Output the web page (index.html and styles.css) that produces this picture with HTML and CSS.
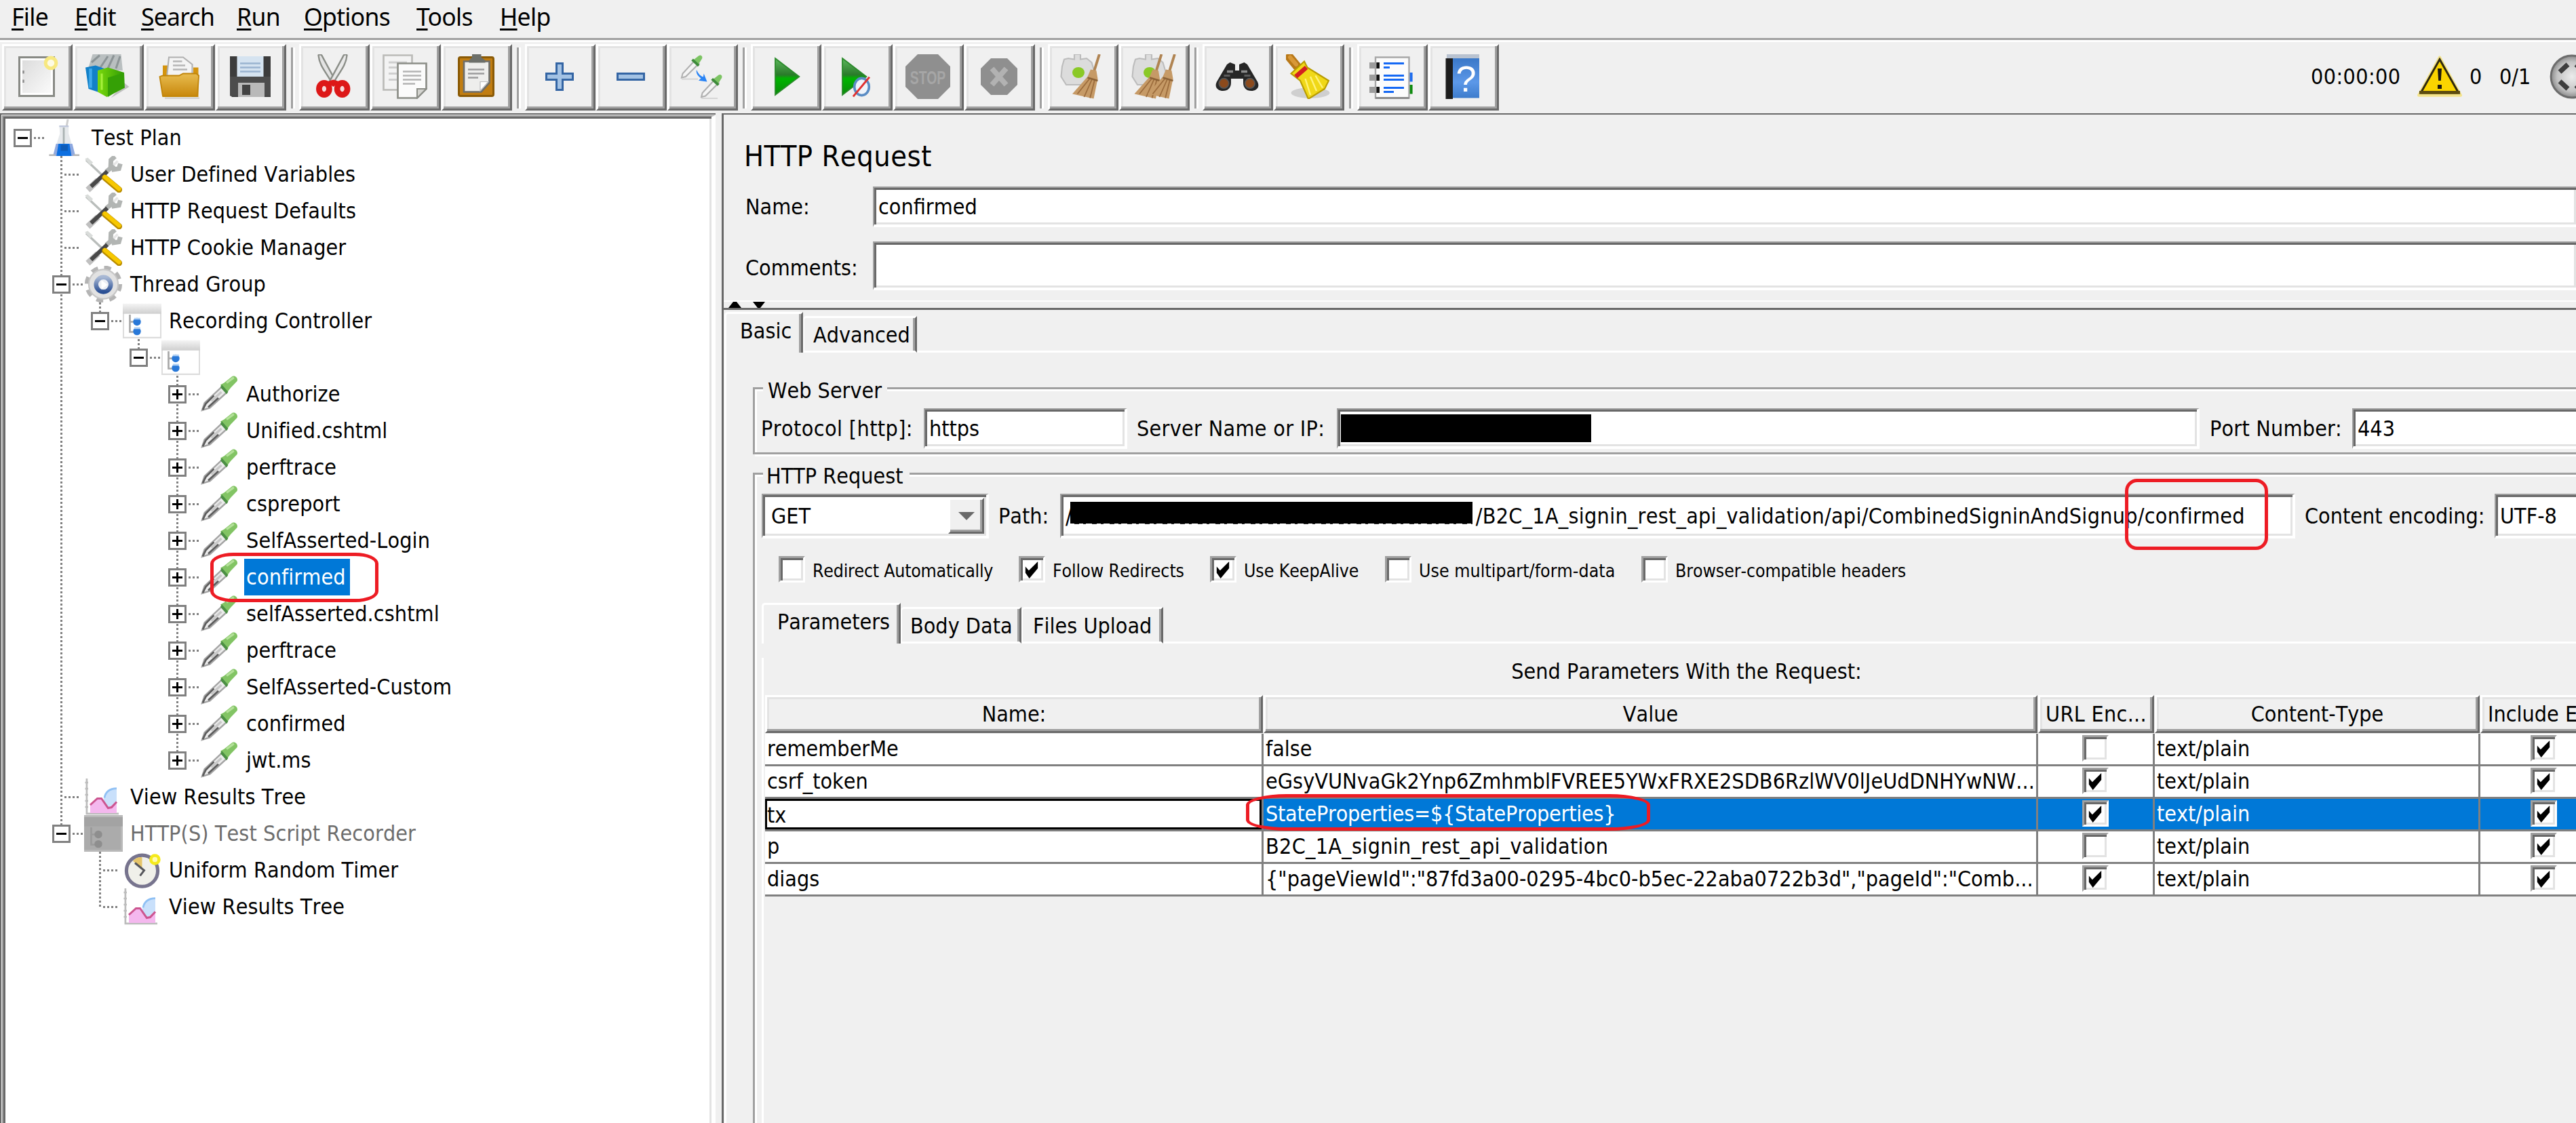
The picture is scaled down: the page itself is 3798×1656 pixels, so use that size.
FILE: index.html
```html
<!DOCTYPE html>
<html lang="en">
<head>
<meta charset="utf-8">
<title>Apache JMeter</title>
<link rel="stylesheet" href="styles.css">
</head>
<body>
<svg class="defs" width="0" height="0">
  <defs>
    <linearGradient id="gGold" x1="0" y1="0" x2="0" y2="1"><stop offset="0" stop-color="#e8bc50"/><stop offset="1" stop-color="#c8880c"/></linearGradient>
    <linearGradient id="gPaper" x1="0" y1="0" x2="1" y2="1"><stop offset="0" stop-color="#dcdcdc"/><stop offset="1" stop-color="#fafafa"/></linearGradient>
    <linearGradient id="gPlay" x1="0" y1="0" x2="0" y2="1"><stop offset="0" stop-color="#5cb85c"/><stop offset=".45" stop-color="#2a7a2a"/><stop offset=".55" stop-color="#00b400"/><stop offset="1" stop-color="#0a8a0a"/></linearGradient>
    <linearGradient id="gGreen" x1="0" y1="0" x2="1" y2="0"><stop offset="0" stop-color="#7ad80c"/><stop offset="1" stop-color="#2f9c04"/></linearGradient>
    <linearGradient id="gHead" x1="0" y1="0" x2="0" y2="1"><stop offset="0" stop-color="#f4f4f4"/><stop offset="1" stop-color="#cfcfcf"/></linearGradient>
    <linearGradient id="gBook" x1="0" y1="0" x2="0" y2="1"><stop offset="0" stop-color="#3a78c8"/><stop offset=".6" stop-color="#5c98e8"/><stop offset="1" stop-color="#3d7ccc"/></linearGradient>
    <linearGradient id="gRing" x1="0" y1="0" x2="0" y2="1"><stop offset="0" stop-color="#a8b8d4"/><stop offset="1" stop-color="#2a4f94"/></linearGradient>
    <radialGradient id="gBall"><stop offset="0" stop-color="#ececec"/><stop offset=".7" stop-color="#c4c4c4"/><stop offset="1" stop-color="#8c8c8c"/></radialGradient>
  </defs>
  <symbol id="dropper" viewBox="0 0 19 18">
    <path d="M1 17l1.200-3.600L10.500 5.600l2.600 2.600-8.300 7.600z" fill="#ececec" stroke="#a4a4a4" stroke-width=".8"/>
    <path d="M1.300 16.800l1.500-3 4-4M4 15.500l5-4.600" fill="none" stroke="#5c5c5c" stroke-width=".9"/>
    <path d="M5.500 12.500l5-4.500" stroke="#c8c8c8" stroke-width="1.200"/>
    <path d="M10 4.500l1.800-1 4-3.200c1.500-.6 3 .9 2.400 2.400L15 6l-2 2.600z" fill="#82c464"/>
    <path d="M10.600 4.300l3.200 3.600-.8 1.200-3-3.400z" fill="#4c9044"/>
    <path d="M13 3.500l3.600-2.600" stroke="#b4e09a" stroke-width="1.100"/>
  </symbol>
  <symbol id="tools" viewBox="0 0 19 18">
    <path d="M1 2l8.500 8" stroke="#b9bdbb" stroke-width="1.100"/>
    <path d="M.4 1.400l1.400-.6 2.600 2.400-1.400 1.300z" fill="#d9dcda"/>
    <path d="M10.800 7.800l4-3.300M13 6.500l.2-4.500 2-1.800M13.500 6.800l3.600-.6.7-2.400" stroke="#b2b5b3" stroke-width="2.300" fill="none"/>
    <path d="M14.500 4.500l2-2" stroke="#e6e6e6" stroke-width="1.200"/>
    <path d="M1.800 16.700l5-4.700" stroke="#c0c0c0" stroke-width="3"/>
    <path d="M3.400 15l8-7.400" stroke="#484848" stroke-width="2"/>
    <path d="M10.200 10.700l7 5.900" stroke="#b98c00" stroke-width="3" stroke-linecap="round"/>
    <path d="M10.200 10.300l7 5.900" stroke="#f7c800" stroke-width="2" stroke-linecap="round"/>
  </symbol>
  <symbol id="flask" viewBox="0 0 19 18">
    <path d="M10.300 4l.7-4" stroke="#cfcfcf" stroke-width="1"/>
    <path d="M6.800 3h4.600v4l3.200 11H3.600L7.100 7z" fill="#e6e9ec"/>
    <path d="M6.800 3.400h4.600" stroke="#c0c8dc" stroke-width=".8"/>
    <path d="M9 4v8" stroke="#a9b2b2" stroke-width=".9"/>
    <path d="M5.200 12h8l1.500 6H3.700z" fill="#8fa9e0"/>
    <path d="M6.400 12h5.400l1 6H5.400z" fill="#0d6fe0"/>
    <path d="M7.500 12.500h3.500v3h-3.500z" fill="#0f5cb8"/>
    <path d="M1.800 17.600h3M13.700 17.600h3" stroke="#b5b5b5" stroke-width=".8"/>
  </symbol>
  <symbol id="gear" viewBox="0 0 19 18">
    <circle cx="9.500" cy="9" r="8" fill="none" stroke="#b4b4b4" stroke-width="2.400" stroke-dasharray="3.300 3"/>
    <circle cx="9.500" cy="9" r="7.200" fill="#e2e2e2" stroke="#c6c6c6" stroke-width=".7"/>
    <circle cx="9.500" cy="9.200" r="3.600" fill="#eceef3" stroke="url(#gRing)" stroke-width="2.200"/>
    <path d="M8.500 7v4.500l3-2.200z" fill="#fff"/>
  </symbol>
  <symbol id="controller" viewBox="0 0 19 18">
    <path d="M.3 1.500h18.400v15.800H.3z" fill="#fff" stroke="#dcdcdc" stroke-width=".7"/>
    <path d="M0 .6h19v5H0z" fill="url(#gHead)"/>
    <path d="M3.500 6v8.500H6M3.500 9.500H6" fill="none" stroke="#a8a8a8" stroke-width=".9"/>
    <circle cx="7" cy="9.500" r="1.900" fill="#2878d8"/><circle cx="7" cy="14.200" r="1.900" fill="#2878d8"/>
    <path d="M5.600 8h3M5.600 12.600h3" stroke="#b0d0f4" stroke-width=".9"/>
  </symbol>
  <symbol id="controller-off" viewBox="0 0 19 18">
    <path d="M0 0h19v18H0z" fill="#ababab"/><path d="M0 0h19v1H0zM0 17h19v1H0zM18 0h1v18h-1z" fill="#b8b8b8"/>
    <path d="M0 1h19v4.500H0z" fill="#a3a3a3"/>
    <path d="M3.500 6v8.500H6M3.500 9.500H6" fill="none" stroke="#9a9a9a" stroke-width=".9"/>
    <circle cx="7" cy="9.500" r="1.900" fill="#8e8e8e"/><circle cx="7" cy="14.200" r="1.900" fill="#8e8e8e"/>
  </symbol>
  <symbol id="chart" viewBox="0 0 19 18">
    <path d="M1.300 0v17.300H17" fill="none" stroke="#bcbcbc" stroke-width=".9"/>
    <path d="M.5 2h1.500M.5 5h1.500M.5 8h1.500M.5 11h1.500M.5 14h1.500" stroke="#bcbcbc" stroke-width=".8"/>
    <path d="M9.500 11c.5-4 2.500-5.800 6.500-6v11h-4z" fill="#c9e0fb"/>
    <path d="M10 9.500c.5-3 2.500-4.500 6-4.600" fill="none" stroke="#8fc0f4" stroke-width=".9"/>
    <path d="M3 12.500L7.500 9.500l4 5 4.500-3v5.500H3z" fill="#f4b8ee"/>
    <path d="M3 13L6.500 9.800h2l3.300 4.700 1.700-.3 2.500-2.700" fill="none" stroke="#cc5590" stroke-width="1"/>
  </symbol>
  <symbol id="timer" viewBox="0 0 19 18">
    <circle cx="9.500" cy="9.400" r="7.700" fill="#f0f0ea" stroke="#77748e" stroke-width="1.700"/>
    <path d="M5 4.500c1.500-1.700 3.200-2 4.500-1.700v6z" fill="#e6c56a"/>
    <path d="M6 5.500l4.500 3.700-2 2.600" fill="none" stroke="#55555a" stroke-width="1"/>
    <circle cx="15.800" cy="3.800" r="2" fill="#fffbb0" stroke="#f5ea1c" stroke-width="1.500"/>
  </symbol>

  <symbol id="i-new" viewBox="0 0 22 22">
    <path d="M2.500 1.500h17v19h-17z" fill="#fff" stroke="#888a85"/><path d="M4 3h14v16H4z" fill="url(#gPaper)"/>
    <path d="M4.500 8v1.500M4.500 12.500v1.500" stroke="#888" stroke-width=".8"/>
    <circle cx="18" cy="4.300" r="2.600" fill="#fdfbe4" stroke="#f7e880" stroke-width="1.700"/>
  </symbol>
  <symbol id="i-templates" viewBox="0 0 22 22">
    <path d="M3.500 0h14l.8 8H1z" fill="#b9bfc0"/><path d="M3 4l4-3.500M7 7l4-6M11 7l3-6.500M15 7l2-6" stroke="#8c9496" stroke-width="1"/>
    <path d="M19 14l2.500 2-9 5.500z" fill="#c0c0c0"/>
    <path d="M0 6.500l5-1 5.500 2V20L1.500 17z" fill="#1280c8"/><path d="M2.500 7v9.500" stroke="#3da8ea" stroke-width="1.500"/>
    <path d="M6 8l5-1.500 8 2.500.3 7.500L10.500 21 6 18.500z" fill="url(#gGreen)"/>
    <path d="M11 11.500V21l8-5V9z" fill="#35a006"/><path d="M8 9.500v8" stroke="#a6f03c" stroke-width="1"/>
  </symbol>
  <symbol id="i-open" viewBox="0 0 22 22">
    <path d="M3 5.500h4V12h11V6.500h2.500V21H3z" fill="#d4940e"/>
    <path d="M6 1.500h7l4.500 3.500v6H5z" fill="#f4f4f4" stroke="#b0b0b0" stroke-width=".7"/><path d="M8 3.500h4.500M8 5.500h6M8 7.500h7" stroke="#b5b5b5" stroke-width=".8"/>
    <path d="M1.500 11L3 10.500h8l2-1h6.500l1.200 1L20 20.600H3z" fill="url(#gGold)" stroke="#c08408" stroke-width=".6"/>
    <path d="M4 21.600h17" stroke="#d2d2d2" stroke-width=".8"/>
  </symbol>
  <symbol id="i-save" viewBox="0 0 22 22">
    <path d="M1 1h20v20H2l-1-1z" fill="#3c3c3c"/><path d="M1 11h20v9.500H1z" fill="#4c4c4c"/>
    <path d="M4.500 1h13v10h-13z" fill="#d5e3f0"/><path d="M6 4.500h10M6 6.500h10M6 8.500h10" stroke="#9ab4d0" stroke-width=".9"/>
    <path d="M5 14h13v7H5z" fill="#b9b9b9"/><path d="M7 15h4v5H7z" fill="#424242"/>
  </symbol>
  <symbol id="i-cut" viewBox="0 0 22 22">
    <path d="M3.500.5c.8-1 1.800 0 2 .8l6.500 12-1.500 1.500C7.500 9 4 6 3.500.5z" fill="#e3e3e3" stroke="#8b8e88" stroke-width=".8"/>
    <path d="M17.500.5c-.8-1-1.800 0-2 .8l-6.500 12 1.500 1.500C13.500 9 17 6 17.500.5z" fill="#e9e9e9" stroke="#8b8e88" stroke-width=".8"/>
    <ellipse cx="6.300" cy="17" rx="2.500" ry="2.900" fill="#f6dada" stroke="#dd1818" stroke-width="2.900"/><ellipse cx="15.200" cy="17" rx="2.500" ry="2.900" fill="#f6dada" stroke="#dd1818" stroke-width="2.900"/>
    <path d="M7.500 13.500l3.300-1 3.300 1-3.300 2.500z" fill="#dd1818"/>
  </symbol>
  <symbol id="i-copy" viewBox="0 0 22 22">
    <path d="M.5.500h14v17H.5z" fill="#f3f3f3" stroke="#bbbbb8" stroke-width=".9"/><path d="M3 4h9M3 6.500h4M3 9.500h4M3 12.500h4" stroke="#cfcfcf"/>
    <path d="M7.500 4.500h14v12.500l-4.500 4.500H7.500z" fill="#fbfbfb" stroke="#8c8e88" stroke-width=".9"/>
    <path d="M10 8.500h9M10 10.500h9M10 12.500h9M10 14.500h6" stroke="#b4b4b4" stroke-width=".8"/><path d="M21.500 17H17v4.500z" fill="#d4d4d0" stroke="#8c8e88" stroke-width=".7"/>
  </symbol>
  <symbol id="i-paste" viewBox="0 0 22 22">
    <rect x="2.500" y="1.500" width="17" height="19" rx=".8" fill="#c17d11" stroke="#8a5a06"/>
    <path d="M5 3.500h12.500V14l-4 4.500H5z" fill="#eeeeec" stroke="#6e6e6a" stroke-width=".9"/><path d="M7 7.500h8M7 9.500h8M7 11.500h5" stroke="#9c9c9c" stroke-width=".9"/><path d="M17 13.500h-4V18z" fill="#fff" stroke="#bbb" stroke-width=".4"/>
    <path d="M9 0h4.500v1.500L15.500 3v1.200h-8V3L9 1.500z" fill="#6c6f6a"/>
  </symbol>
  <symbol id="i-plus" viewBox="0 0 22 22"><path d="M9.500 4.500h3v5h5v3h-5v5h-3v-5h-5v-3h5z" fill="#a3c2e4" stroke="#3465a4"/></symbol>
  <symbol id="i-minus" viewBox="0 0 22 22"><path d="M4.500 9.500h13v3h-13z" fill="#a3c2e4" stroke="#3465a4"/></symbol>
  <symbol id="i-toggle" viewBox="0 0 22 22">
    <g id="mini"><path d="M1 11.500l.5-2L7.500 3l2 1.600-6.500 6.400z" fill="#f5f5f5" stroke="#b0b0b0" stroke-width=".7"/><path d="M6.500 3l3-2.300c1-.6 2 .4 1.500 1.500L9 5.300z" fill="#7cc463"/><path d="M6.200 2.600l3.200 3" stroke="#3e8a3a" stroke-width="1.300"/><path d="M1 12.200h8" stroke="#d5d5d5" stroke-width=".7"/></g>
    <use href="#mini" x="9.700" y="9.500"/>
    <path d="M8.300 7.700c1 2 1.800 3 3.300 3.500l.3-1.700 1.600 4-4.200-.6 1.200-1.100C9 10.800 8 9.500 8.300 7.700z" fill="#2a84f5"/>
  </symbol>
  <symbol id="i-play" viewBox="0 0 22 22"><path d="M6 2l11.800 9L6 20z" fill="url(#gPlay)" stroke="#2b8a2b" stroke-width=".6"/></symbol>
  <symbol id="i-playnp" viewBox="0 0 22 22"><path d="M4 2l11.800 9L4 20z" fill="url(#gPlay)" stroke="#2b8a2b" stroke-width=".6"/><ellipse cx="13.500" cy="16" rx="3.600" ry="4.200" fill="#eef3fa" stroke="#5a8cc4" stroke-width="1.200"/><path d="M17.300 11.200L9.300 20.800" stroke="#e03030" stroke-width="1"/></symbol>
  <symbol id="i-shut" viewBox="0 0 22 22"><path d="M7 2h8l5 5v8l-5 5H7l-5-5V7z" fill="#8f8f8f"/><path d="M7.500 7l7 8M14.500 7l-7 8" stroke="#b2b2b2" stroke-width="2.600"/></symbol>
  <symbol id="i-clear" viewBox="0 0 22 22">
    <g id="sheet"><path d="M7 2.500V0h3v2.500l3-.5 2.500 2 1.500 5-1 6H3L.5 11 1 6l1-3.500 2-.5z" fill="#dcdcdc" stroke="#bcbcbc" stroke-width=".7"/><ellipse cx="9" cy="9" rx="3" ry="2.700" fill="#8ac926"/></g>
    <g id="besom"><path d="M19.300 0L16.500 9" stroke="#b08452" stroke-width="1.300"/><path d="M15 7.500l2.800.5.7 4-2 9.800L6 19.500 13.500 11z" fill="#c69a66"/><path d="M14.500 12l-6 7.500M15.800 12l-4 9M17 12.500l-2.300 9" stroke="#9c6c3c" stroke-width=".6"/><path d="M13.500 11.500l5 1.500" stroke="#8c6236" stroke-width=".9"/></g>
  </symbol>
  <symbol id="i-clearall" viewBox="0 0 22 22"><use href="#sheet"/><use href="#besom" x="-4.500"/><use href="#besom" x="2"/></symbol>
  <symbol id="i-find" viewBox="0 0 22 22">
    <path d="M6 5l1.500-1L10 5v3h2V5l2.500-1L16 5l5 8.500c1.500 3-1 4.500-3 4.500-2.500 0-4-1.500-4-4V12H8v2c0 2.500-1.500 4-4 4-2 0-4.500-1.500-3-4.500z" fill="#262626"/>
    <path d="M6 8.500h3M13 8.500h3" stroke="#8c8c8c" stroke-width="1.200"/><path d="M4.500 10.500h3M14.500 10.500h3" stroke="#5c5c5c" stroke-width="1"/>
    <circle cx="4.500" cy="14.300" r="2.400" fill="#8c4a1c" stroke="#555" stroke-width=".6"/><circle cx="17.300" cy="14.300" r="2.400" fill="#8c4a1c" stroke="#555" stroke-width=".6"/>
  </symbol>
  <symbol id="i-reset" viewBox="0 0 22 22">
    <ellipse cx="12" cy="19" rx="9.500" ry="2.600" fill="#cfcfcf"/>
    <path d="M1.800 1.500L5.500 6" stroke="#b87818" stroke-width="4.300" stroke-linecap="round"/><path d="M2 1.500L5 5" stroke="#d89838" stroke-width="2" stroke-linecap="round"/>
    <path d="M2.500 9.500L9 3.500l1.500 3L21 13l-2 4-8 5-4-9z" fill="#f0d818" stroke="#b89c00" stroke-width=".7"/><path d="M12 11l3 7M9.500 12l2.500 8M14.500 10.500l3.500 6" stroke="#fff27a" stroke-width=".8"/>
    <path d="M4.800 11L10 6.500" stroke="#d42020" stroke-width="2.200"/>
  </symbol>
  <symbol id="i-func" viewBox="0 0 22 22">
    <path d="M19 9h2.200v4.500H19z" fill="#1c6cf0"/><path d="M19 15h2.200v4.500H19z" fill="#0c8a0c"/>
    <path d="M3 1.500h16.500v20H3z" fill="#fcfcfc" stroke="#a8a8a8" stroke-width=".8"/><path d="M3 21.500h16.500" stroke="#8c8c8c"/>
    <path d="M0 4h5v3H0zM0 10h5v3H0zM0 16h5v3H0z" fill="#9c9c9c"/><path d="M3.500 4h1.500v3H3.500zM3.500 10h1.500v3H3.500zM3.500 16h1.500v3H3.500z" fill="#111"/>
    <path d="M7 4.500h10M7 6.500h3M7 10.500h10M7 12.500h10M7 16.500h10M7 18.500h5" stroke="#1468f4" stroke-width="1"/>
  </symbol>
  <symbol id="i-warn" viewBox="0 0 22 22">
    <path d="M11 1.500l10.300 18.700H.7z" fill="#fad400" stroke="#f4e48c" stroke-width="1.400" stroke-linejoin="round"/><path d="M11 2.500l9.300 16.500H1.700z" fill="#fad400" stroke="#2e2810" stroke-width="1"/><path d="M1 18h20v1.500H1z" fill="#5c4c10"/>
    <path d="M10 7h2l-.4 6h-1.200zM10 15h2v2h-2z" fill="#1c1810"/>
  </symbol>
  <symbol id="i-idle" viewBox="0 0 22 22">
    <circle cx="11" cy="11" r="10.300" fill="url(#gBall)" stroke="#6c6c6c" stroke-width="1"/>
    <path d="M5 8.700L9 5M5 13.300L9 17M17 8.700L13 5M17 13.300L13 17" stroke="#3e3e3e" stroke-width="2.400"/>
  </symbol>
  <symbol id="check" viewBox="0 0 24 30"><path d="M1 9l6 7L23 0v12L8 30 1 20z" fill="#000"/></symbol>
</svg>

<div class="app">
  <nav class="menubar">
    <span class="m-file"><u>F</u>ile</span><span class="m-edit"><u>E</u>dit</span><span class="m-search"><u>S</u>earch</span><span class="m-run"><u>R</u>un</span><span class="m-options"><u>O</u>ptions</span><span class="m-tools"><u>T</u>ools</span><span><u>H</u>elp</span>
  </nav>
  <div class="toolbar">
    <div class="group"><b class="btn"><svg><use href="#i-new"/></svg></b><b class="btn"><svg><use href="#i-templates"/></svg></b><b class="btn"><svg><use href="#i-open"/></svg></b><b class="btn"><svg><use href="#i-save"/></svg></b></div><i class="sep"></i>
    <div class="group"><b class="btn"><svg><use href="#i-cut"/></svg></b><b class="btn"><svg><use href="#i-copy"/></svg></b><b class="btn"><svg><use href="#i-paste"/></svg></b></div><i class="sep"></i>
    <div class="group"><b class="btn"><svg><use href="#i-plus"/></svg></b><b class="btn"><svg><use href="#i-minus"/></svg></b><b class="btn"><svg><use href="#i-toggle"/></svg></b></div><i class="sep"></i>
    <div class="group"><b class="btn"><svg><use href="#i-play"/></svg></b><b class="btn"><svg><use href="#i-playnp"/></svg></b>
      <b class="btn"><svg viewBox="0 0 22 22"><path d="M6 0h10l6 6v10l-6 6H6l-6-6V6z" fill="#8f8f8f"/><text class="stop" x="11" y="14.600" textLength="17.500" lengthAdjust="spacingAndGlyphs">STOP</text></svg></b>
      <b class="btn"><svg><use href="#i-shut"/></svg></b></div><i class="sep"></i>
    <div class="group"><b class="btn"><svg><use href="#i-clear"/></svg></b><b class="btn"><svg><use href="#i-clearall"/></svg></b></div><i class="sep"></i>
    <div class="group"><b class="btn"><svg><use href="#i-find"/></svg></b><b class="btn"><svg><use href="#i-reset"/></svg></b></div><i class="sep"></i>
    <div class="group"><b class="btn"><svg><use href="#i-func"/></svg></b>
      <b class="btn"><svg viewBox="0 0 22 22"><path d="M3 0h16v2.500H3z" fill="#b8c2d0"/><path d="M2.500 2h3.500v20H2.500z" fill="#1c1c1c"/><path d="M6 2h13v19.500H6z" fill="url(#gBook)"/><text class="qmark" x="12.500" y="18.300">?</text></svg></b></div>
    <div class="status"><span class="clock">00:00:00</span><svg><use href="#i-warn"/></svg><span class="errors">0</span><span class="threads">0/1</span><svg><use href="#i-idle"/></svg></div>
  </div>

  <div class="main">
    <aside class="left"><div class="tree">
      <div class="node"><i class="g x minus"></i><svg><use href="#flask"/></svg><span>Test Plan</span></div>
      <div class="node"><i class="g"></i><i class="g tee"></i><svg><use href="#tools"/></svg><span>User Defined Variables</span></div>
      <div class="node"><i class="g"></i><i class="g tee"></i><svg><use href="#tools"/></svg><span>HTTP Request Defaults</span></div>
      <div class="node"><i class="g"></i><i class="g tee"></i><svg><use href="#tools"/></svg><span>HTTP Cookie Manager</span></div>
      <div class="node"><i class="g"></i><i class="g x v minus"></i><svg><use href="#gear"/></svg><span>Thread Group</span></div>
      <div class="node"><i class="g"></i><i class="g v"></i><i class="g x up minus"></i><svg><use href="#controller"/></svg><span>Recording Controller</span></div>
      <div class="node"><i class="g"></i><i class="g v"></i><i class="g"></i><i class="g x up minus"></i><svg><use href="#controller"/></svg></div>
      <div class="node"><i class="g"></i><i class="g v"></i><i class="g"></i><i class="g"></i><i class="g x v plus"></i><svg><use href="#dropper"/></svg><span>Authorize</span></div>
      <div class="node"><i class="g"></i><i class="g v"></i><i class="g"></i><i class="g"></i><i class="g x v plus"></i><svg><use href="#dropper"/></svg><span>Unified.cshtml</span></div>
      <div class="node"><i class="g"></i><i class="g v"></i><i class="g"></i><i class="g"></i><i class="g x v plus"></i><svg><use href="#dropper"/></svg><span>perftrace</span></div>
      <div class="node"><i class="g"></i><i class="g v"></i><i class="g"></i><i class="g"></i><i class="g x v plus"></i><svg><use href="#dropper"/></svg><span>cspreport</span></div>
      <div class="node"><i class="g"></i><i class="g v"></i><i class="g"></i><i class="g"></i><i class="g x v plus"></i><svg><use href="#dropper"/></svg><span>SelfAsserted-Login</span></div>
      <div class="node"><i class="g"></i><i class="g v"></i><i class="g"></i><i class="g"></i><i class="g x v plus"></i><svg><use href="#dropper"/></svg><span class="selected">confirmed</span><em class="mark mark-node"></em></div>
      <div class="node"><i class="g"></i><i class="g v"></i><i class="g"></i><i class="g"></i><i class="g x v plus"></i><svg><use href="#dropper"/></svg><span>selfAsserted.cshtml</span></div>
      <div class="node"><i class="g"></i><i class="g v"></i><i class="g"></i><i class="g"></i><i class="g x v plus"></i><svg><use href="#dropper"/></svg><span>perftrace</span></div>
      <div class="node"><i class="g"></i><i class="g v"></i><i class="g"></i><i class="g"></i><i class="g x v plus"></i><svg><use href="#dropper"/></svg><span>SelfAsserted-Custom</span></div>
      <div class="node"><i class="g"></i><i class="g v"></i><i class="g"></i><i class="g"></i><i class="g x v plus"></i><svg><use href="#dropper"/></svg><span>confirmed</span></div>
      <div class="node"><i class="g"></i><i class="g v"></i><i class="g"></i><i class="g"></i><i class="g x up plus"></i><svg><use href="#dropper"/></svg><span>jwt.ms</span></div>
      <div class="node"><i class="g"></i><i class="g tee"></i><svg><use href="#chart"/></svg><span>View Results Tree</span></div>
      <div class="node"><i class="g"></i><i class="g x up minus"></i><svg><use href="#controller-off"/></svg><span class="off">HTTP(S) Test Script Recorder</span></div>
      <div class="node"><i class="g"></i><i class="g"></i><i class="g tee"></i><svg><use href="#timer"/></svg><span>Uniform Random Timer</span></div>
      <div class="node"><i class="g"></i><i class="g"></i><i class="g corner"></i><svg><use href="#chart"/></svg><span>View Results Tree</span></div>
    </div></aside>

    <section class="right">
      <h1>HTTP Request</h1>
      <div class="field name"><label>Name:</label><div class="input">confirmed</div></div>
      <div class="field comments"><label>Comments:</label><div class="input"></div></div>
      <div class="divider"><svg viewBox="0 0 60 9"><path d="M0 9L7 0h5l7 9zM36 0h18l-7 9h-4z"/></svg></div>
      <div class="tabs"><span class="tab on t-basic">Basic</span><span class="tab t-adv">Advanced</span><i></i></div>
      <div class="panel">
        <div class="box server">
          <span class="legend l-server">Web Server</span>
          <div class="row">
            <label class="w-proto">Protocol [http]:</label><div class="input i-proto">https</div>
            <label class="w-name">Server Name or IP:</label><div class="input i-name"><i class="redact"></i></div>
            <label class="w-port">Port Number:</label><div class="input i-port">443</div>
          </div>
        </div>
        <div class="box request">
          <span class="legend l-request">HTTP Request</span>
          <div class="row tall">
            <div class="input combo"><span>GET</span><b><svg viewBox="0 0 24 12"><path d="M0 0h24L12 12z"/></svg></b></div>
            <label class="w-path">Path:</label>
            <div class="input i-path"><span>/</span><i class="redact"></i><span class="path">/B2C_1A_signin_rest_api_validation/api/CombinedSigninAndSignup/confirmed</span><em class="mark mark-path"></em></div>
            <label class="w-enc">Content encoding:</label><div class="input i-enc">UTF-8</div>
          </div>
          <div class="checks">
            <i class="cb"></i><span class="c1">Redirect Automatically</span>
            <i class="cb"><svg><use href="#check"/></svg></i><span class="c2">Follow Redirects</span>
            <i class="cb"><svg><use href="#check"/></svg></i><span class="c3">Use KeepAlive</span>
            <i class="cb"></i><span class="c4">Use multipart/form-data</span>
            <i class="cb"></i><span class="c5">Browser-compatible headers</span>
          </div>
          <div class="tabs inner"><span class="tab on t-par">Parameters</span><span class="tab t-body">Body Data</span><span class="tab t-files">Files Upload</span><i></i></div>
          <div class="panel args">
            <p class="caption">Send Parameters With the Request:</p>
            <div class="grid">
              <div class="th">Name:</div><div class="th">Value</div><div class="th enc">URL Enc...</div><div class="th">Content-Type</div><div class="th last">Include E...</div>
              <div class="td">rememberMe</div><div class="td">false</div><div class="td c"><i class="cb"></i></div><div class="td">text/plain</div><div class="td c"><i class="cb"><svg><use href="#check"/></svg></i></div>
              <div class="td">csrf_token</div><div class="td"><span class="token">eGsyVUNvaGk2Ynp6ZmhmblFVREE5YWxFRXE2SDB6RzlWV0lJeUdDNHYwNW...</span></div><div class="td c"><i class="cb"><svg><use href="#check"/></svg></i></div><div class="td">text/plain</div><div class="td c"><i class="cb"><svg><use href="#check"/></svg></i></div>
              <div class="td focus">tx</div><div class="td sel"><span class="state">StateProperties=${StateProperties}</span><em class="mark mark-cell"></em></div><div class="td c sel"><i class="cb"><svg><use href="#check"/></svg></i></div><div class="td sel">text/plain</div><div class="td c sel"><i class="cb"><svg><use href="#check"/></svg></i></div>
              <div class="td">p</div><div class="td"><span class="policy">B2C_1A_signin_rest_api_validation</span></div><div class="td c"><i class="cb"></i></div><div class="td">text/plain</div><div class="td c"><i class="cb"><svg><use href="#check"/></svg></i></div>
              <div class="td">diags</div><div class="td"><span class="diags">{"pageViewId":"87fd3a00-0295-4bc0-b5ec-22aba0722b3d","pageId":"Comb...</span></div><div class="td c"><i class="cb"><svg><use href="#check"/></svg></i></div><div class="td">text/plain</div><div class="td c"><i class="cb"><svg><use href="#check"/></svg></i></div>
            </div>
          </div>
        </div>
      </div>
    </section>
  </div>
</div>
</body>
</html>
```
FILE: styles.css
```css
*, *::before, *::after { box-sizing: border-box; }
body {
  margin: 0;
  background: #f0f0f0;
  color: #000;
  font: 32px "DejaVu Sans Condensed", "DejaVu Sans", sans-serif;
  font-stretch: condensed;
  font-kerning: none;
  white-space: nowrap;
}
i, em, b { font-style: normal; font-weight: normal; }
svg { display: block; flex: none; }
.defs { position: absolute; }
.app { width: 3798px; height: 1656px; overflow: hidden; display: flex; flex-direction: column; }

/* menu bar */
.menubar {
  flex: none; height: 62px; padding-left: 17px; display: flex;
  border-bottom: 3px solid #fff; box-shadow: inset 0 -3px #a0a0a0;
  font: 35.500px/49px "Noto Sans", sans-serif; letter-spacing: -0.7px;
}
.menubar u { text-decoration-thickness: 3px; text-underline-offset: 4px; }
.m-file { width: 93px; } .m-edit { width: 98px; } .m-search { width: 141px; }
.m-run { width: 99px; } .m-options { width: 166px; } .m-tools { width: 123px; }

/* tool bar */
.toolbar { flex: none; height: 105px; padding: 3px 0 0 3px; display: flex; align-items: flex-start; }
.toolbar > * { flex: none; }
.group { display: flex; gap: 1px; }
.btn {
  width: 104px; height: 98px; padding: 12px 0 0 15px;
  border: 3px solid; border-color: #fff #696969 #696969 #fff;
  box-shadow: inset -3px -3px #a0a0a0, inset 3px 3px #e3e3e3;
}
.btn svg, .status svg { width: 66px; height: 66px; }
.stop { font: bold 9px "Liberation Sans", sans-serif; text-anchor: middle; fill: #a6a6a6; }
.qmark { font: 18px "Liberation Sans", sans-serif; text-anchor: middle; fill: #fff; }
.sep { width: 6px; height: 90px; margin: 5px 6px 0 7px; background: linear-gradient(90deg, #a0a0a0 50%, #fff 50%); }
.status { margin-left: 1197px; padding-top: 15px; display: flex; line-height: 66px; }
.clock { width: 157px; letter-spacing: .4px; }
.errors { width: 44px; margin-left: 11px; }
.threads { width: 74px; }

.main { flex: 1; min-height: 0; display: flex; }

/* test plan tree */
.left { flex: none; width: 1055px; border-top: 2px solid #696969; border-left: 2px solid #696969; padding: 1px 0 0 1px; }
.tree {
  height: 100%; background: #fff; padding-top: 4px; padding-left: 0;
  border-top: 2px solid #a0a0a0; border-left: 2px solid #a0a0a0; border-right: 6px solid #fff;
  box-shadow: inset 3px 3px #696969, inset -3px 0 #e3e3e3;
}
.node { position: relative; height: 54px; line-height: 54px; display: flex; letter-spacing: .1px; }
.node > svg { width: 57px; height: 54px; margin: 0 8px 0 5px; }
.node > span { padding: 0 8px 0 3px; }
.node > .selected { background: #0078d7; color: #fff; width: 156px; }
.node > .off { color: #6d6d6d; }
.g { position: relative; width: 57px; height: 54px; flex: none; --v: repeating-linear-gradient(#808080 0 3px, transparent 3px 6px); --h: repeating-linear-gradient(90deg, #808080 0 3px, transparent 3px 6px); background-repeat: no-repeat; }
.v { background-image: var(--v); background-size: 3px 54px; background-position: 27px 0; }
.up { background-image: var(--v); background-size: 3px 14px; background-position: 27px 0; }
.tee { background-image: var(--v), var(--h); background-size: 3px 54px, 27px 3px; background-position: 27px 0, 33px 26px; }
.corner { background-image: var(--v), var(--h); background-size: 3px 27px, 27px 3px; background-position: 27px 0, 33px 26px; }
.x::before {
  content: ""; position: absolute; left: 15px; top: 14px; width: 27px; height: 27px; border: 3px solid #808080;
  background: linear-gradient(#000, #000) 3px 9px / 15px 3px no-repeat #fff;
}
.plus::before { background: linear-gradient(#000, #000) 3px 9px / 15px 3px no-repeat, linear-gradient(#000, #000) 9px 3px / 3px 15px no-repeat #fff; }
.x::after { content: ""; position: absolute; left: 45px; top: 26px; width: 15px; height: 3px; background: var(--h); }

/* red annotations */
.mark { position: absolute; border: 5px solid #ed1c24; pointer-events: none; z-index: 2; }
.mark-node { left: 305px; top: -9px; width: 248px; height: 73px; border-radius: 34px / 16px; }
.mark-path { left: 1568px; top: -24px; width: 211px; height: 105px; border-radius: 18px; }
.mark-cell { left: -26px; top: -7px; width: 596px; height: 54px; border-radius: 60px / 16px; }

/* editor */
.right { flex: 1; min-width: 0; margin-left: 9px; border-top: 2px solid #696969; border-left: 3px solid #696969; display: flex; flex-direction: column; }
label { flex: none; text-indent: -1px; }
h1 { margin: 31px 0 0 30px; font-size: 43px; font-weight: normal; line-height: 60px; letter-spacing: .5px; }
.field { flex: none; display: flex; margin-left: 33px; }
.field label { width: 187px; }
.field .input { flex: 1; border-right: 0; }
.name { margin-top: 15px; height: 60px; line-height: 60px; }
.comments { margin-top: 21px; height: 72px; line-height: 78px; }
.input {
  position: relative; flex: none; height: 100%; background: #fff; padding-left: 6px;
  border: 2px solid; border-color: #a0a0a0 #fff #fff #a0a0a0; border-bottom-width: 4px; border-right-width: 4px;
  box-shadow: inset 3px 3px #696969, inset -3px -3px #e3e3e3;
}
.name .input, .row .input { line-height: 56px; }
.divider { flex: none; height: 14px; margin-top: 15px; border-top: 2px solid #fff; border-bottom: 3px solid #696969; padding-left: 7px; }
.divider svg { width: 60px; height: 9px; }
.tabs { flex: none; display: flex; align-items: flex-end; height: 63px; margin-left: 1px; }
.tabs > i { flex: 1; height: 3px; background: #fff; }
.tab {
  flex: none; height: 54px; line-height: 51px; border: 3px solid; border-color: #fff #696969 #fff #fff; border-left-width: 2px;
  box-shadow: inset -3px 0 #a0a0a0; padding-left: 12px; border-top-left-radius: 5px;
}
.tab.on { height: 60px; padding-left: 20px; border-bottom: 0; border-left-width: 3px; }
.t-basic { width: 116px; } .t-adv { width: 168px; }
.t-adv { padding-left: 13px; }
.panel { flex: 1; margin-left: 1px; border-left: 3px solid #fff; }
.box { margin-left: 39px; width: 2800px; border: 3px solid #a0a0a0; box-shadow: inset 3px 3px #fff, 3px 3px #fff; padding-left: 10px; }
.server { margin-top: 51px; height: 99px; }
.request { margin-top: 27px; height: 1100px; }
.legend { display: block; position: relative; margin: -18px 0 6px 2px; height: 40px; line-height: 40px; padding-left: 5px; background: #f0f0f0; }
.l-server { width: 183px; padding-left: 7px; } .l-request { width: 216px; }
.row { display: flex; height: 60px; line-height: 60px; }
.row.tall { height: 66px; line-height: 66px; }
.tall .input { line-height: 62px; }
.w-proto { width: 239px; letter-spacing: .4px; } .i-proto { width: 300px; }
.w-name { width: 294px; margin-left: 15px; letter-spacing: .3px; } .i-name { width: 1272px; }
.w-port { width: 209px; margin-left: 16px; letter-spacing: .2px; } .i-port { width: 400px; }
.redact { display: block; position: relative; flex: none; background: #000; }
.i-name .redact { width: 369px; height: 41px; margin: 7px 0 0 -2px; }
.combo { width: 335px; padding: 4px 3px 3px 12px; display: flex; justify-content: space-between; }
.combo span { line-height: 54px; }
.combo b { width: 53px; padding: 18px 0 0 12px; background: #f0f0f0; border: 3px solid; border-color: #fff #696969 #696969 #fff; box-shadow: inset -3px -3px #a0a0a0; }
.combo b svg { width: 24px; height: 12px; fill: #696969; }
.w-path { width: 90px; margin-left: 15px; }
.i-path { width: 1821px; display: flex; padding-left: 6px; }
.i-path .redact { width: 593px; height: 32px; margin: 10px 5px 0 -3px; }
.i-path .redact::after { content: ""; position: absolute; left: 6px; right: 0; top: 100%; height: 1px; background: repeating-linear-gradient(90deg, #333 0 7px, #fff 7px 13px, #333 13px 17px, #fff 17px 26px); }
.path { letter-spacing: .27px; }
.w-enc { width: 279px; margin-left: 15px; } .i-enc { width: 300px; }

.checks { display: flex; margin: 26px 0 0 25px; height: 39px; font-size: 26.500px; line-height: 43px; letter-spacing: -.1px; }
.checks span { flex: none; margin-left: 11px; }
.c1 { width: 304px; letter-spacing: -.25px; } .c2 { width: 232px; } .c3 { width: 208px; } .c4 { width: 328px; letter-spacing: .05px; }
.cb {
  display: block; flex: none; width: 39px; height: 39px; background: #fff; padding: 5px 0 0 5px;
  border: 3px solid; border-color: #a0a0a0 #fff #fff #a0a0a0;
  box-shadow: inset 3px 3px #696969, inset -3px -3px #e3e3e3;
}
.cb svg { width: 22px; height: 25px; }
.tabs.inner { height: 60px; margin: 30px 0 0 0; }
.t-par { width: 205px; } .t-body { width: 178px; } .t-files { width: 209px; padding-left: 15px; }
.args { margin-left: 0; height: 900px; }
.caption { margin: 21px 0 15px; width: 2721px; height: 40px; line-height: 40px; text-align: center; }
.grid { margin-left: 2px; width: 2719px; display: grid; grid-template-columns: 735px 1142px 172px 480px 190px; grid-template-rows: 57px repeat(5, 48px); }
.th {
  margin: 0 1px 1px 0; line-height: 50px; text-align: center; border: 3px solid; border-color: #fff #696969 #696969 #fff;
  box-shadow: inset -3px -3px #a0a0a0, inset 3px 3px #e3e3e3;
}
.th.enc { letter-spacing: .3px; }
.th.last { text-align: left; padding-left: 8px; overflow: hidden; }
.td { position: relative; min-width: 0; background: #fff; padding-left: 3px; line-height: 45px; border-right: 3px solid #808080; border-bottom: 3px solid #808080; }
.td.c { display: flex; justify-content: center; padding: 2px 0 0; }
.td.sel { background: #0078d7; color: #fff; }
.td.focus { line-height: 49px; box-shadow: inset 0 0 0 3px #000; }
.state { letter-spacing: -.25px; }
.policy { letter-spacing: .3px; }
.token, .diags { letter-spacing: .04px; }
```
